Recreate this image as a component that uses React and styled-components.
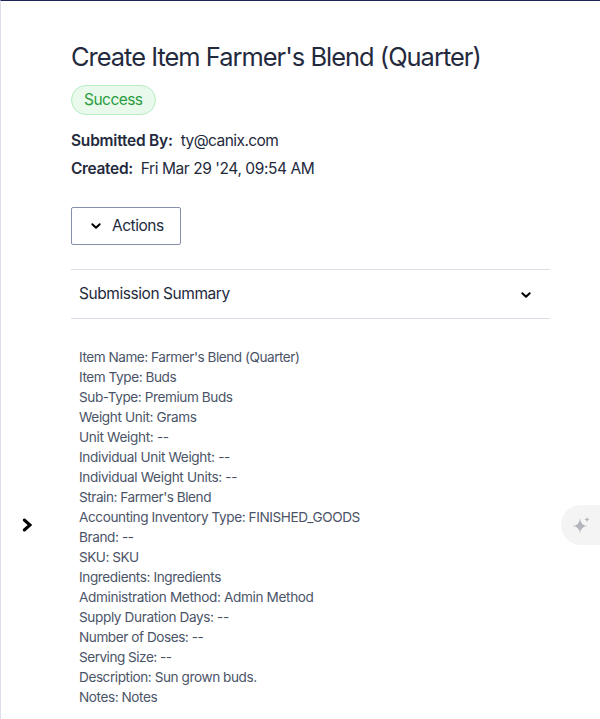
import React from "react";
import styled, { createGlobalStyle } from "styled-components";

const Global = createGlobalStyle`
  * { box-sizing: border-box; }
  body { margin: 0; background: #fff; overflow: hidden; font-family: Inter, "Liberation Sans", sans-serif; font-weight: 400; color: #242a3d; }
`;

const Page = styled.div`
  display: grid;
  grid-template-columns: 70px 479px 1fr;
  width: 600px;
  height: 719px;
  overflow: hidden;
  border-top: 1px solid #1d2458;
  border-left: 1px solid #dcdeea;
`;
const Side = styled.div`
  display: flex;
  padding-top: 516px;
  padding-left: 20px;
`;
const RightSide = styled.div`
  display: flex;
  justify-content: flex-end;
  padding-top: 504px;
`;
const AssistTab = styled.button`
  display: flex;
  align-items: center;
  justify-content: center;
  width: 39px;
  height: 40px;
  padding: 0;
  border: 0;
  border-radius: 20px 0 0 20px;
  background: #f4f4f4;
`;
const Main = styled.main`
  display: flex;
  flex-direction: column;
  align-items: flex-start;
  padding-top: 38px;
  white-space: nowrap;
`;
const Title = styled.h1`
  margin: 0;
  font-size: 25.4px;
  line-height: 36px;
  font-weight: 400;
  letter-spacing: -0.97px;
`;
const Badge = styled.span`
  display: flex;
  align-items: center;
  height: 30px;
  width: 85px;
  margin-top: 10px;
  padding: 0 0 2px 12px;
  border: 1px solid #b4eebf;
  border-radius: 15px;
  background: #e9f9ec;
  color: #2b9c40;
  font-size: 15.5px;
  letter-spacing: -0.53px;
`;
const Details = styled.div`
  margin-top: 12px;
`;
const Detail = styled.div`
  display: flex;
  gap: 8px;
  font-size: 15.5px;
  line-height: 28px;
  letter-spacing: ${(p) => p.$spacing};
`;
const Label = styled.span`
  font-weight: 600;
  letter-spacing: ${(p) => p.$spacing};
`;
const Actions = styled.button`
  display: flex;
  align-items: center;
  gap: 10px;
  width: 110px;
  height: 38px;
  margin-top: 24px;
  padding: 0 0 2px 18px;
  border: 1px solid #8490a9;
  border-radius: 2px;
  background: #fff;
  color: inherit;
  font: inherit;
  font-size: 15.5px;
  letter-spacing: -0.47px;

  svg { margin-top: 2px; }
`;
const SummaryHeader = styled.div`
  display: flex;
  align-items: center;
  justify-content: space-between;
  width: 100%;
  height: 50px;
  margin-top: 24px;
  padding: 0 18px 2px 8px;
  border: solid #dcdee8;
  border-width: 1px 0;
  font-size: 15.5px;
  letter-spacing: -0.44px;

  svg { margin-top: 3px; }
`;
const List = styled.div`
  padding: 28px 8px 0;
  font-size: 13.6px;
  line-height: 20px;
  color: #4b5467;
`;
const Line = styled.div`
  letter-spacing: ${(p) => p.$spacing}px;
`;

const Chevron = () => (
  <svg width="12" height="12" viewBox="0 0 12 12" fill="none" stroke="#000" strokeWidth="2" strokeLinecap="round" strokeLinejoin="round">
    <path d="M2.3 4.3 6 7.8 9.7 4.3" />
  </svg>
);

const lines = [
  ["Item Name: Farmer's Blend (Quarter)", -0.47],
  ["Item Type: Buds", -0.44],
  ["Sub-Type: Premium Buds", -0.42],
  ["Weight Unit: Grams", -0.36],
  ["Unit Weight: --", -0.33],
  ["Individual Unit Weight: --", -0.35],
  ["Individual Weight Units: --", -0.33],
  ["Strain: Farmer's Blend", -0.46],
  ["Accounting Inventory Type: FINISHED_GOODS", -0.41],
  ["Brand: --", -0.4],
  ["SKU: SKU", -0.5],
  ["Ingredients: Ingredients", -0.4],
  ["Administration Method: Admin Method", -0.36],
  ["Supply Duration Days: --", -0.38],
  ["Number of Doses: --", -0.45],
  ["Serving Size: --", -0.5],
  ["Description: Sun grown buds.", -0.43],
  ["Notes: Notes", -0.43],
];

export default function App() {
  return (
    <Page>
      <Global />
      <Side>
        <svg width="12" height="16" viewBox="0 0 12 16" fill="none" stroke="#000" strokeWidth="3" strokeLinecap="round">
          <path d="M3.3 3 9 8 3.3 13" />
        </svg>
      </Side>
      <Main>
        <Title>Create Item Farmer's Blend (Quarter)</Title>
        <Badge>Success</Badge>
        <Details>
          <Detail $spacing="-0.56px"><Label $spacing="-0.22px">Submitted By:</Label><span>ty@canix.com</span></Detail>
          <Detail $spacing="-0.43px"><Label $spacing="-0.34px">Created:</Label><span>Fri Mar 29 '24, 09:54 AM</span></Detail>
        </Details>
        <Actions><Chevron /><span>Actions</span></Actions>
        <SummaryHeader><span>Submission Summary</span><Chevron /></SummaryHeader>
        <List>
          {lines.map(([text, spacing]) => <Line key={text} $spacing={spacing}>{text}</Line>)}
        </List>
      </Main>
      <RightSide>
        <AssistTab aria-label="Assistant">
          <svg width="18" height="18" viewBox="0 0 18 18" fill="#b4b5bd">
            <path d="M8 2Q8.3 9.7 16 10Q8.3 10.3 8 18Q7.7 10.3 0 10Q7.7 9.7 8 2Z" />
            <path d="M8 6 9.4 8.6 12 10 9.4 11.4 8 14 6.6 11.4 4 10 6.6 8.6Z" />
            <path d="M15 1.2Q15.5 3.1 17.4 3.6Q15.5 4.1 15 6Q14.5 4.1 12.6 3.6Q14.5 3.1 15 1.2Z" />
          </svg>
        </AssistTab>
      </RightSide>
    </Page>
  );
}
